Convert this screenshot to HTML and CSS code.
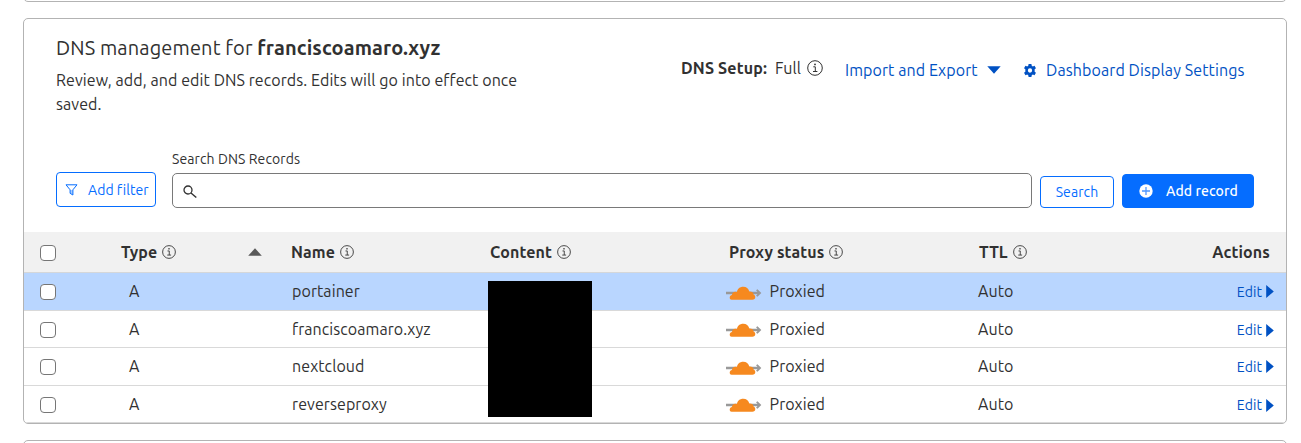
FILE: index.html
```html
<!DOCTYPE html>
<html lang="en">
<head>
<meta charset="utf-8">
<title>DNS management</title>
<link rel="stylesheet" href="styles.css">
</head>
<body>
<svg class="defs" width="0" height="0" aria-hidden="true">
  <symbol id="info" viewBox="0 0 16 16"><circle cx="8" cy="8" r="7.3" fill="none" stroke="currentColor" stroke-width="1"/><path d="M6.3 6.8h2v4.6M6 11.500h4.400" fill="none" stroke="currentColor" stroke-width="1"/><circle cx="8" cy="4.400" r=".9" fill="currentColor"/></symbol>
  <symbol id="cloud" viewBox="0 0 36 16"><path d="M0 6.700h31.500L30 5.200 31.500 4.300 35.300 8l-3.800 3.700L30 10.800l1.500-1.500H0z" fill="#999"/><path d="M5.600 14.700C4.400 14.700 3.700 13.800 3.700 12.700c0-1.500 1-2.500 2.300-2.700-.2-2.600 2.700-4.100 5-2.900C11.200 3.800 13.800 1.700 17.300 1.700c3 0 5.300 1.900 6 4.800 2.500-.2 4.100 1 4.300 2.900 1.100.5 1.700 1.300 1.700 2.500 0 1.700-1.200 2.800-2.900 2.800z" fill="#f6891f"/></symbol>
</svg>
<main class="page">
  <section class="card card-prev"></section>
  <section class="card card-main">
    <header class="head">
      <div class="intro">
        <h1 class="title">DNS management for <b>franciscoamaro.xyz</b></h1>
        <p class="desc">Review, add, and edit DNS records. Edits will go into effect once<br>saved.</p>
      </div>
      <div class="setup"><b class="setup-label">DNS Setup:</b><span class="setup-value">Full</span><svg class="info-lg"><use href="#info"/></svg></div>
      <a class="link link-import"><span>Import and Export</span><svg class="caret" viewBox="0 0 14 8"><path d="M.3.200h13.400L7 7.800z" fill="currentColor"/></svg></a>
      <a class="link link-settings"><svg class="gear" viewBox="0 0 12 12"><path fill="currentColor" fill-rule="evenodd" d="M4.700 0h2.600l.3 1.600 1 .6 1.600-.6 1.300 2.300-1.200 1v2.200l1.200 1-1.300 2.300-1.600-.6-1 .6-.3 1.600H4.700l-.3-1.600-1-.6-1.600.6L.5 8.100l1.200-1V4.900l-1.200-1 1.300-2.300 1.600.6 1-.6zM6 4a2 2 0 1 0 0 4 2 2 0 0 0 0-4z"/></svg><span>Dashboard Display Settings</span></a>
    </header>
    <div class="tools">
      <button class="btn btn-filter"><svg class="funnel" viewBox="0 0 13 12"><path d="M1 .800h11L7.900 5.800V11L5.100 9.300V5.800z" fill="none" stroke="currentColor"/><path d="M5.200 6h2.600v4.500L5.200 9z" fill="currentColor" opacity=".35"/></svg><span>Add filter</span></button>
      <div class="field">
        <label class="field-label">Search DNS Records</label>
        <div class="field-box"><svg class="lens" viewBox="0 0 14 13"><circle cx="5" cy="5" r="4" fill="none" stroke="currentColor" stroke-width="1.300"/><path d="M8 8l5.300 4.500" fill="none" stroke="currentColor" stroke-width="1.400"/></svg></div>
      </div>
      <button class="btn btn-search">Search</button>
      <button class="btn btn-add"><svg class="plus" viewBox="0 0 14 14"><circle cx="7" cy="7" r="6.700" fill="#fff"/><path d="M7 3v8M3 7h8" stroke="#4f96ff" stroke-width="1.300"/></svg><span>Add record</span></button>
    </div>
    <div class="table">
      <div class="row row-head">
        <span class="check"></span>
        <span class="cell h-type"><span>Type</span><svg class="info"><use href="#info"/></svg><svg class="sort" viewBox="0 0 14 8"><path d="M.2 7.800L7 .3l6.800 7.500z" fill="#595959"/></svg></span>
        <span class="cell"><span>Name</span><svg class="info"><use href="#info"/></svg></span>
        <span class="cell"><span>Content</span><svg class="info"><use href="#info"/></svg></span>
        <span class="cell"><span>Proxy status</span><svg class="info"><use href="#info"/></svg></span>
        <span class="cell"><span>TTL</span><svg class="info"><use href="#info"/></svg></span>
        <span class="cell h-actions">Actions</span>
      </div>
      <div class="row row-active">
        <span class="check"></span><span class="cell type">A</span><span class="cell name">portainer</span><span class="cell"></span>
        <span class="cell proxy"><svg class="cloud"><use href="#cloud"/></svg><span>Proxied</span></span><span class="cell ttl">Auto</span>
        <a class="cell edit"><span>Edit</span><svg class="arrow" viewBox="0 0 8 13"><path d="M.2 0L7.800 6.500.2 13z" fill="currentColor"/></svg></a>
      </div>
      <div class="row row-short">
        <span class="check"></span><span class="cell type">A</span><span class="cell name">franciscoamaro.xyz</span><span class="cell"></span>
        <span class="cell proxy"><svg class="cloud"><use href="#cloud"/></svg><span>Proxied</span></span><span class="cell ttl">Auto</span>
        <a class="cell edit"><span>Edit</span><svg class="arrow" viewBox="0 0 8 13"><path d="M.2 0L7.800 6.500.2 13z" fill="currentColor"/></svg></a>
      </div>
      <div class="row">
        <span class="check"></span><span class="cell type">A</span><span class="cell name">nextcloud</span><span class="cell"></span>
        <span class="cell proxy"><svg class="cloud"><use href="#cloud"/></svg><span>Proxied</span></span><span class="cell ttl">Auto</span>
        <a class="cell edit"><span>Edit</span><svg class="arrow" viewBox="0 0 8 13"><path d="M.2 0L7.800 6.500.2 13z" fill="currentColor"/></svg></a>
      </div>
      <div class="row row-short">
        <span class="check"></span><span class="cell type">A</span><span class="cell name">reverseproxy</span><span class="cell"></span>
        <span class="cell proxy"><svg class="cloud"><use href="#cloud"/></svg><span>Proxied</span></span><span class="cell ttl">Auto</span>
        <a class="cell edit"><span>Edit</span><svg class="arrow" viewBox="0 0 8 13"><path d="M.2 0L7.800 6.500.2 13z" fill="currentColor"/></svg></a>
      </div>
      <div class="redaction"></div>
    </div>
  </section>
  <section class="card card-next"></section>
</main>
</body>
</html>
```
FILE: styles.css
```css
* { box-sizing: border-box; }
body { margin: 0; background: #fff; color: #313131; font: 16px/24px Ubuntu, "Noto Sans", sans-serif; letter-spacing: 0.08px; overflow: hidden; }
svg { display: block; flex: none; }
.defs { position: absolute; }
.page { height: 443px; padding: 0 14px 0 23px; display: flex; flex-direction: column; gap: 16px; overflow: hidden; }
.card { flex: none; border: 1px solid #b3b3b3; border-radius: 5px; background: #fff; }
.card-prev { height: 20px; margin-top: -18px; }
.card-main { height: 406px; overflow: hidden; }
.card-next { height: 20px; }

.head { display: flex; height: 129px; padding: 15px 0 0 32px; white-space: nowrap; }
.intro { width: 625px; }
.title { margin: 0; font-size: 20px; line-height: 28px; font-weight: 400; letter-spacing: 0.13px; }
.desc { margin: 6px 0 0; }
.setup { width: 164px; height: 24px; margin-top: 22px; display: flex; align-items: center; }
.setup-label { width: 94px; letter-spacing: 0.15px; }
.setup-value { width: 32px; }
.info-lg { width: 16px; height: 16px; }
.link { height: 24px; margin-top: 24px; display: flex; align-items: center; color: #0051c3; }
.link-import { width: 178px; justify-content: space-between; padding-right: 22px; }
.caret { width: 14px; height: 8px; }
.link-settings { gap: 9px; letter-spacing: 0.1px; }
.gear { width: 14px; height: 13px; }

.tools { display: flex; align-items: flex-end; height: 60px; padding-left: 32px; font-size: 14px; letter-spacing: 0.1px; }
.btn { font: inherit; letter-spacing: inherit; margin: 0; padding: 0; display: flex; align-items: center; border: 1px solid #056dff; border-radius: 4px; color: #056dff; background: #fff; white-space: nowrap; }
.btn-filter { width: 100px; height: 35px; margin: 0 16px 1px 0; padding-left: 8px; gap: 10px; letter-spacing: 0.05px; }
.funnel { width: 13px; height: 12px; }
.field { width: 860px; display: flex; flex-direction: column; }
.field-label { height: 26px; line-height: 24px; }
.field-box { height: 35px; border: 1px solid #797979; border-radius: 5px; display: flex; align-items: center; padding: 2px 0 0 10px; }
.lens { width: 14px; height: 13px; }
.btn-search { width: 74px; height: 32px; margin-left: 8px; justify-content: center; }
.btn-add { width: 132px; height: 34px; margin-left: 8px; padding-left: 16px; gap: 13px; background: #056dff; color: #fff; font-weight: 500; letter-spacing: 0.08px; }
.plus { width: 14px; height: 14px; }

.table { position: relative; margin-top: 24px; }
.row { display: grid; grid-template-columns: 97px 170px 199px 239px 250px 207px 100px; height: 38px; padding-bottom: 2px; border-bottom: 1px solid #d9d9d9; align-items: center; white-space: nowrap; }
.row-short { height: 37px; padding-bottom: 0; }
.row-active { background: #b9d6ff; }
.row-head { height: 41px; padding-bottom: 0; background: #f1f1f1; font-weight: 700; border-bottom-color: #d5d7d9; letter-spacing: 0.12px; }
.check { width: 16px; height: 16px; margin: 2px 0 0 16px; border: 1px solid #767676; border-radius: 4px; background: #fff; }
.cell { display: flex; align-items: center; }
.row-head .cell { gap: 5px; }
.info { width: 14px; height: 14px; }
.h-type .sort { width: 14px; height: 8px; margin-left: auto; margin-right: 29px; }
.h-actions { justify-content: flex-end; padding-right: 16px; }
.type { padding-left: 8px; }
.name { padding-left: 1px; }
.proxy { margin-left: -3px; gap: 7.500px; }
.cloud { width: 36px; height: 16px; margin-top: 4px; }
.row-short .cloud { margin-top: 2px; }
.ttl { margin-left: -1px; }
.edit { justify-content: flex-end; gap: 4px; padding: 2px 12px 0 0; font-size: 14px; color: #0051c3; }
.arrow { width: 8px; height: 13px; }
.redaction { position: absolute; left: 464px; top: 49px; width: 104px; height: 136px; background: #000; }
```
